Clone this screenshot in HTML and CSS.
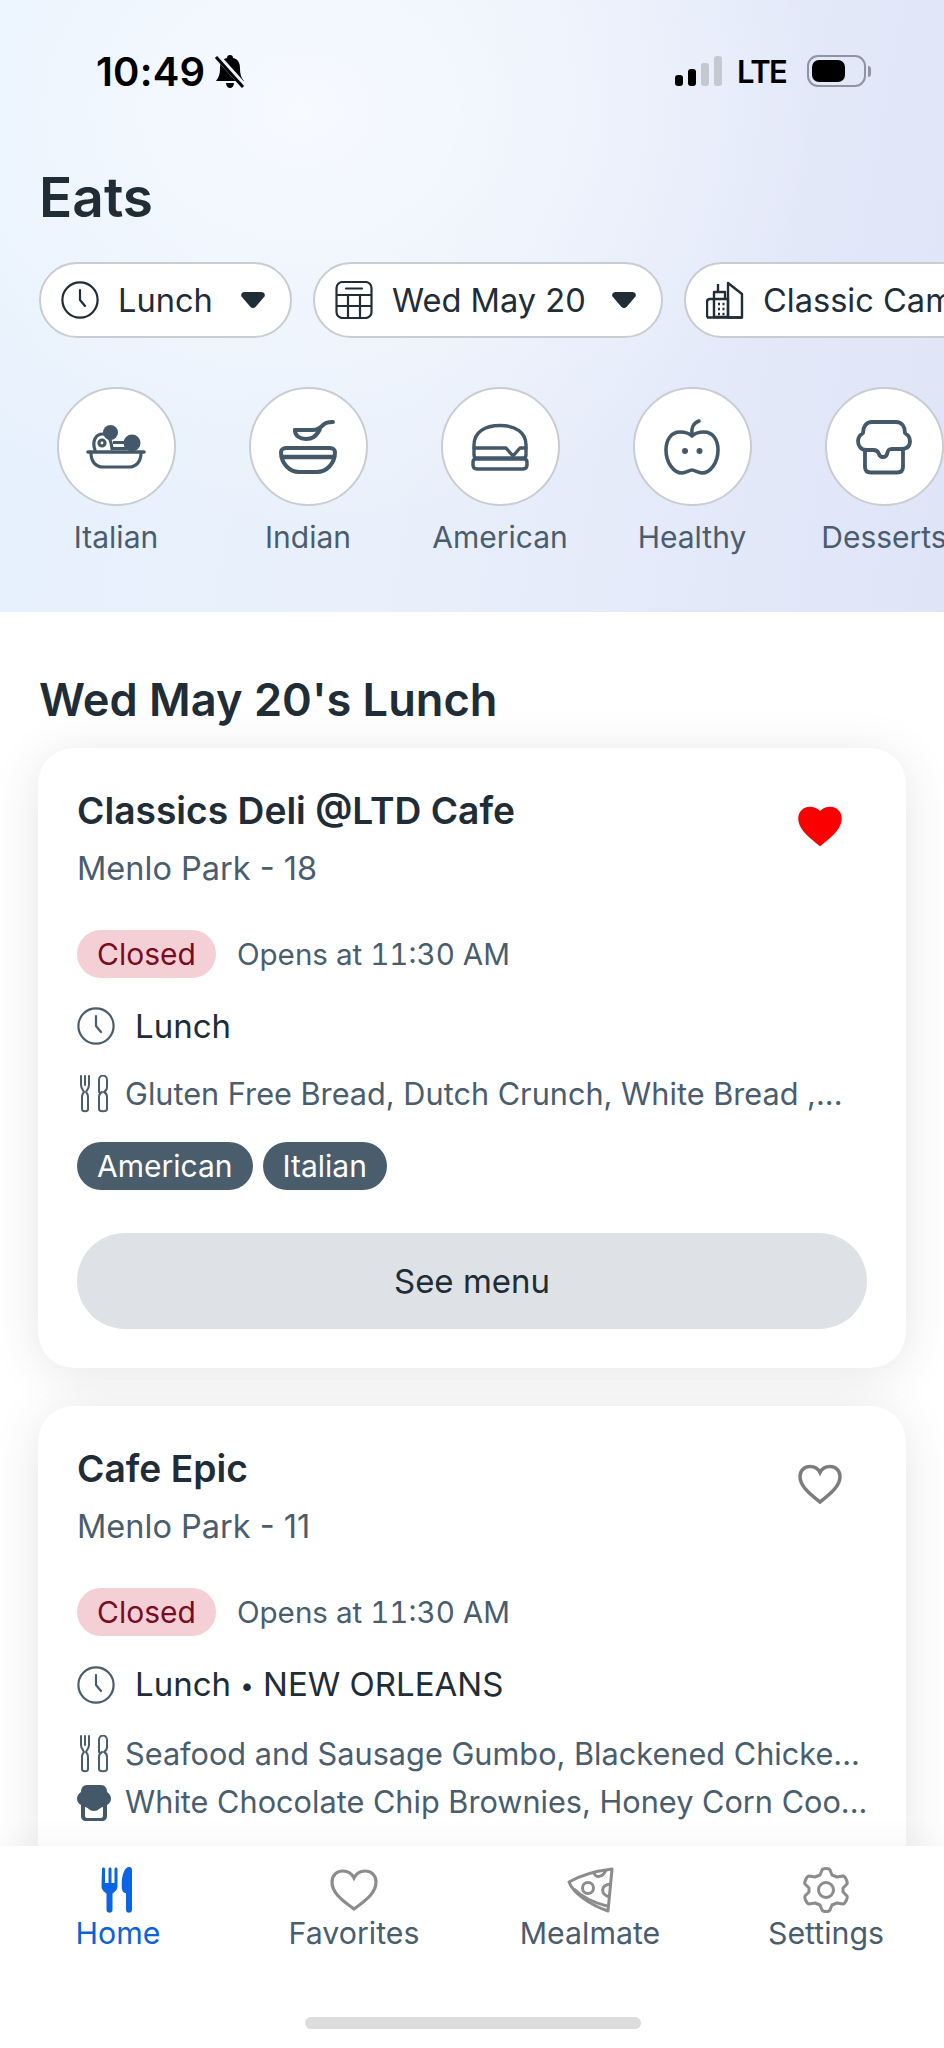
FILE: index.html
```html
<!DOCTYPE html>
<html lang="en">
<head>
  <meta charset="UTF-8">
  <title>Eats</title>
  <link rel="stylesheet" href="styles.css">
</head>
<body>

<svg class="sprite" xmlns="http://www.w3.org/2000/svg">
  <symbol id="i-clock" viewBox="0 0 38 38">
    <circle cx="19" cy="19" r="17.6" fill="none" stroke="currentColor" stroke-width="2.2"/>
    <path d="M19 9v10l5 6" fill="none" stroke="currentColor" stroke-width="2.2" stroke-linecap="round" stroke-linejoin="round"/>
  </symbol>
  <symbol id="i-fork" viewBox="-2 0 34 38">
    <g fill="none" stroke="currentColor" stroke-width="2" stroke-linecap="round" stroke-linejoin="round">
      <path d="M2 1v9c0 3 2 5 3 7c-2 2-2 3-2 5v12c0 3 6 3 6 0V22c0-2 0-3-2-5 1-2 3-4 3-7V1M6 1v9"/>
      <path d="M20 17V5c0-6 8-6 8 0v7c0 3-1 4-3 5 2 1 3 2 3 5v12c0 3-8 3-8 0V22c0-2 1-4 3-5"/>
    </g>
  </symbol>
  <symbol id="i-heart" viewBox="0 0 46 42">
    <path d="M23 39C10 29 3 22 3 13.500C3 7.500 7.500 3.500 13 3.500c4 0 8 2 10 6 2-4 6-6 10-6 5.500 0 10 4 10 10C43 22 36 29 23 39z"/>
  </symbol>
  <symbol id="i-caret" viewBox="0 0 24 16">
    <path d="M4 0h16c3 0 4.500 2 3.500 4.500L14.500 15c-1.300 1.300-3.700 1.300-5 0L.5 4.500C-.5 2 1 0 4 0z"/>
  </symbol>
</svg>

<div class="app">
  <div class="scroller">

    <header class="hero">
      <div class="status">
        <div class="status-left">
          <span class="time">10:49</span>
          <svg class="bell" viewBox="0 0 32 34">
            <path d="M16 1c2 0 3 1 3 3 5 1 7 5 7 10 0 6 1 9 4 13H2c3-4 4-7 4-13 0-5 2-9 7-10 0-2 1-3 3-3z" fill="#000"/>
            <path d="M12 29h8c0 3-2 5-4 5s-4-2-4-5z" fill="#000"/>
            <path d="M3 2l27 30" stroke="#eef3fd" stroke-width="6"/>
            <path d="M2 3l27 30" stroke="#000" stroke-width="3"/>
          </svg>
        </div>
        <div class="status-right">
          <div class="signal"><i class="b1"></i><i class="b2"></i><i class="b3"></i><i class="b4"></i></div>
          <span class="lte">LTE</span>
          <div class="battery"><div class="charge"></div></div>
          <div class="nub"></div>
        </div>
      </div>

      <h1>Eats</h1>

      <div class="chips">
        <div class="chip chip-meal">
          <svg class="chip-icon"><use href="#i-clock"/></svg>
          <span>Lunch</span>
          <svg class="caret"><use href="#i-caret"/></svg>
        </div>
        <div class="chip chip-date">
          <svg class="chip-icon" viewBox="0 0 38 38">
            <g fill="none" stroke="currentColor" stroke-width="2.200">
              <rect x="1.500" y="1" width="35" height="36" rx="6"/>
              <path d="M2 14h34M2 25h34M13 14v23M25 14v23"/>
              <path d="M11 7.500h16" stroke-linecap="round"/>
            </g>
          </svg>
          <span>Wed May 20</span>
          <svg class="caret"><use href="#i-caret"/></svg>
        </div>
        <div class="chip">
          <svg class="chip-icon" viewBox="0 0 38 38">
            <g fill="none" stroke="currentColor" stroke-width="2.400" stroke-linejoin="round">
              <path d="M1 36.500V21c0-2 1-3 3-3h4v-7h11v7"/>
              <path d="M12 11V3M22 36.500V14l0-12 14 11v23.500z"/>
              <path d="M1 36.500h35"/>
              <path d="M8 18h14v18H8z"/>
              <path d="M12 23h2M16.500 23h2M12 28h2M16.500 28h2M12 33h2M16.500 33h2"/>
            </g>
          </svg>
          <span>Classic Campus</span>
        </div>
      </div>

      <div class="cats">
        <div class="cat">
          <div class="cat-circle">
            <svg viewBox="0 0 60 60">
              <g fill="#43596a">
                <circle cx="24.500" cy="15.500" r="7.500"/>
                <circle cx="46" cy="26" r="8.500"/>
                <rect x="27" y="24" width="14" height="3"/>
                <rect x="27" y="30" width="14" height="3"/>
              </g>
              <g fill="none" stroke="#43596a" stroke-width="3.200" stroke-linecap="round">
                <path d="M9 33c-3-8 0-16 8-16 5 0 8 5 9 15"/>
                <circle cx="16" cy="26" r="3"/>
                <path d="M2 35h56" stroke-width="3.600"/>
                <path d="M5 36c0 9 5 14 12 14h26c7 0 12-5 12-14"/>
              </g>
            </svg>
          </div>
          <span>Italian</span>
        </div>
        <div class="cat">
          <div class="cat-circle">
            <svg viewBox="0 0 60 60">
              <g fill="none" stroke="#43596a" stroke-width="4" stroke-linecap="round" stroke-linejoin="round">
                <path d="M17 13h18c4 0 6-1 9-4 3-3 5-4 11-4"/>
                <path d="M17 13c0 6 5 9 11 9s10-2 14-10"/>
                <path d="M8 31h44c3 0 5 2 5 4 0 12-9 20-18 20H21C12 55 3 47 3 35c0-2 2-4 5-4z"/>
                <path d="M4 40h52" stroke-width="4.500"/>
              </g>
            </svg>
          </div>
          <span>Indian</span>
        </div>
        <div class="cat">
          <div class="cat-circle">
            <svg viewBox="0 0 60 60">
              <g fill="none" stroke="#43596a" stroke-width="3.400" stroke-linecap="round" stroke-linejoin="round">
                <path d="M4 28C4 15 15 8.500 30 8.500S56 15 56 28v10c0 2-1 3-3 3H7c-2 0-3-1-3-3z"/>
                <path d="M4 31h32l7 8 7-8h6"/>
                <path d="M6 42H54c2 0 3 1 3 3v3c0 3-2 4-4 4H7c-2 0-4-1-4-4v-3c0-2 1-3 3-3z"/>
              </g>
            </svg>
          </div>
          <span>American</span>
        </div>
        <div class="cat">
          <div class="cat-circle">
            <svg viewBox="0 0 60 60">
              <g fill="none" stroke="#43596a" stroke-width="3.600" stroke-linecap="round" stroke-linejoin="round">
                <path d="M30 19c3-3 7-4 12-4 9 0 14 8 14 18 0 13-8 23-16 23-4 0-7-3-10-3s-6 3-10 3C12 56 4 46 4 33c0-10 5-18 14-18 5 0 9 1 12 4z"/>
                <path d="M30 18c-1-6 1-12 7-14"/>
              </g>
              <circle cx="23" cy="34" r="3" fill="#43596a"/>
              <circle cx="37.500" cy="34" r="3" fill="#43596a"/>
            </svg>
          </div>
          <span>Healthy</span>
        </div>
        <div class="cat">
          <div class="cat-circle">
            <svg viewBox="0 0 60 60">
              <g fill="none" stroke="#43596a" stroke-width="3.800" stroke-linecap="round" stroke-linejoin="round">
                <path d="M13 33c-6 0-9-4-9-9 0-3 2-6 5-8 0-6 3-11 9-11h24c6 0 9 5 9 11 3 2 5 5 5 8 0 5-3 8-9 8H38c-4 0-4 2-5 5-1 4-7 4-8 0-1-3-3-4-6-4z"/>
                <path d="M11 33v17c0 4 2 5.500 6 5.500h26c4 0 6-1.500 6-5.500V32"/>
              </g>
            </svg>
          </div>
          <span>Desserts</span>
        </div>
      </div>
    </header>

    <main class="list">
      <h2>Wed May 20's Lunch</h2>

      <section class="card">
        <div class="card-head">
          <div>
            <h3>Classics Deli @LTD Cafe</h3>
            <p class="place">Menlo Park - 18</p>
          </div>
          <svg class="fav fav-on"><use href="#i-heart"/></svg>
        </div>
        <div class="hours">
          <span class="closed">Closed</span>
          <span class="opens">Opens at 11:30 AM</span>
        </div>
        <div class="meal">
          <svg class="meal-icon"><use href="#i-clock"/></svg>
          <span>Lunch</span>
        </div>
        <div class="food">
          <svg class="food-icon"><use href="#i-fork"/></svg>
          <span>Gluten Free Bread, Dutch Crunch, White Bread ,...</span>
        </div>
        <div class="tags">
          <span class="tag">American</span>
          <span class="tag">Italian</span>
        </div>
        <button class="menu-btn">See menu</button>
      </section>

      <section class="card card-cut">
        <div class="card-head">
          <div>
            <h3>Cafe Epic</h3>
            <p class="place">Menlo Park - 11</p>
          </div>
          <svg class="fav"><use href="#i-heart"/></svg>
        </div>
        <div class="hours">
          <span class="closed">Closed</span>
          <span class="opens">Opens at 11:30 AM</span>
        </div>
        <div class="meal">
          <svg class="meal-icon"><use href="#i-clock"/></svg>
          <span>Lunch <span class="dot">•</span> NEW ORLEANS</span>
        </div>
        <div class="food">
          <svg class="food-icon"><use href="#i-fork"/></svg>
          <span>Seafood and Sausage Gumbo, Blackened Chicke...</span>
        </div>
        <div class="food food-next">
          <svg class="food-icon" viewBox="0 0 34 38">
            <path d="M10 2h14c4 0 6 3 6 7 3 2 4 4 4 7s-2 5-4 6v11c0 3-2 5-5 5H9c-3 0-5-2-5-5V22c-2-1-4-3-4-6s1-5 4-7c0-4 2-7 6-7z" fill="#43596a"/>
            <path d="M8 24c3 0 4 4 9 4s6-4 9-4v9c0 1-1 2-2 2H10c-1 0-2-1-2-2z" fill="#fff"/>
          </svg>
          <span>White Chocolate Chip Brownies, Honey Corn Coo...</span>
        </div>
      </section>
    </main>
  </div>

  <nav class="tabs">
    <div class="tab tab-on">
      <svg viewBox="0 0 60 46">
        <path d="M14 2c0-2 3-2 3 0v14h3.500V2c0-2 3-2 3 0v14h3V2c0-2 3-2 3 0v17c0 4-3 6-5 7.500V43c0 3.500-6 3.500-6 0V26.500c-2-1.500-5-3.500-5-7.500z" fill="#0b63e5"/>
        <path d="M44 3c0-2-1-3-3-3-4 0-7.300 7-7.300 18 0 6 1.300 8 4.300 8V43c0 3.500 6 3.500 6 0z" fill="#0b63e5"/>
      </svg>
      <span>Home</span>
    </div>
    <div class="tab">
      <svg viewBox="0 0 60 46">
        <path d="M30 42C16 32 8 25 8 15 8 8 13 4 19 4c5 0 9 3 11 7 2-4 6-7 11-7 6 0 11 4 11 11 0 10-8 17-22 27z" fill="none" stroke="#8c8c8c" stroke-width="3.200"/>
      </svg>
      <span>Favorites</span>
    </div>
    <div class="tab">
      <svg viewBox="0 0 60 46">
        <g fill="none" stroke="#8c8c8c" stroke-width="3" stroke-linejoin="round">
          <path d="M52 2L48 44C30 38 13 26 9 15 21 8 36 4 52 2z"/>
          <path d="M14 22C22 30 35 36 47 39"/>
          <path d="M34 6c1 5 9 5 12-3"/>
          <circle cx="28" cy="21" r="5.500"/>
          <path d="M51 17c-11 1-11 11-1 13"/>
        </g>
      </svg>
      <span>Mealmate</span>
    </div>
    <div class="tab">
      <svg viewBox="0 0 60 46">
        <g fill="none" stroke="#8c8c8c" stroke-width="3" stroke-linejoin="round">
          <path d="M26 3c1-2 7-2 8 0l2 5 5 2 6-1c2 0 5 6 4 8l-4 4v4l4 4c1 2-2 8-4 8l-6-1-5 2-2 5c-1 2-7 2-8 0l-2-5-5-2-6 1c-2 0-5-6-4-8l4-4v-4l-4-4c-1-2 2-8 4-8l6 1 5-2z"/>
          <circle cx="30" cy="23" r="7.500"/>
        </g>
      </svg>
      <span>Settings</span>
    </div>
  </nav>

  <div class="home-area"><div class="home-bar"></div></div>
</div>

</body>
</html>
```

FILE: styles.css
```css
:root {
  --ink: #212d36;
  --slate: #4a5d6d;
  --line: #c9ccd1;
}
* {
  box-sizing: border-box;
  margin: 0;
  padding: 0;
}
body {
  font-family: Inter, sans-serif;
  background: #fff;
  color: var(--ink);
}
.sprite {
  display: none;
}
.app {
  width: 944px;
  height: 2048px;
  display: flex;
  flex-direction: column;
  overflow: hidden;
}
.scroller {
  flex: 1;
  min-height: 0;
  overflow: hidden;
}

/* header */
.hero {
  height: 612px;
  padding: 54px 0 0 39px;
  overflow: hidden;
  background:
    radial-gradient(ellipse 520px 420px at 300px 110px, rgba(248, 251, 255, .9), rgba(248, 251, 255, 0)),
    linear-gradient(100deg, #e6f1fd 0%, #e9f0fb 45%, #dfe4f7 100%);
}
.status {
  display: flex;
  justify-content: space-between;
  height: 34px;
  padding: 0 73px 0 57px;
}
.status-left,
.status-right {
  display: flex;
  align-items: center;
}
.time {
  font-size: 40px;
  font-weight: 600;
  color: #000;
  letter-spacing: .2px;
}
.bell {
  width: 32px;
  height: 34px;
  margin-left: 9px;
}
.signal {
  display: flex;
  align-items: flex-end;
  gap: 5px;
  height: 30px;
}
.signal i {
  width: 8px;
  border-radius: 3px;
  background: #000;
}
.signal .b1 { height: 11px; }
.signal .b2 { height: 17px; }
.signal .b3 { height: 23px; background: #c4c8d0; }
.signal .b4 { height: 30px; background: #c4c8d0; }
.lte {
  font-size: 31px;
  font-weight: 600;
  letter-spacing: -1.5px;
  color: #000;
  margin-left: 15px;
  width: 70px;
}
.battery {
  width: 59px;
  height: 32px;
  border: 2px solid #8f93a2;
  border-radius: 11px;
  padding: 3px;
}
.charge {
  width: 33px;
  height: 22px;
  background: #000;
  border-radius: 7px;
}
.nub {
  width: 3px;
  height: 11px;
  margin-left: 2px;
  background: #8f93a2;
  border-radius: 0 3px 3px 0;
}
h1 {
  font-size: 55px;
  font-weight: 600;
  line-height: 64px;
  margin-top: 77px;
}

/* filter pills */
.chips {
  display: flex;
  gap: 21px;
  margin-top: 33px;
}
.chip {
  flex: 0 0 auto;
  display: flex;
  align-items: center;
  height: 76px;
  padding: 0 22px 0 20px;
  background: #fff;
  border: 2px solid var(--line);
  border-radius: 38px;
  font-size: 32.6px;
}
.chip-meal {
  width: 253px;
}
.chip-date {
  width: 350px;
}
.chip-icon {
  flex: none;
  width: 38px;
  height: 38px;
  margin-right: 19px;
}
.caret {
  width: 24px;
  height: 16px;
  margin-left: auto;
  margin-right: 3px;
  fill: var(--ink);
}

/* cuisine shortcuts */
.cats {
  display: flex;
  margin: 49px 0 0 -19px;
}
.cat {
  flex: 0 0 192px;
  display: flex;
  flex-direction: column;
  align-items: center;
}
.cat-circle {
  width: 119px;
  height: 119px;
  display: flex;
  align-items: center;
  justify-content: center;
  background: #fff;
  border: 2px solid var(--line);
  border-radius: 50%;
}
.cat-circle svg {
  width: 60px;
  height: 60px;
}
.cat span {
  margin-top: 10px;
  font-size: 30px;
  line-height: 42px;
  color: var(--slate);
  white-space: nowrap;
}

/* restaurant cards */
.list {
  padding: 0 38px;
}
h2 {
  font-size: 45.2px;
  font-weight: 600;
  line-height: 56px;
  margin: 60px 0 0 1px;
}
.card {
  margin-top: 20px;
  padding: 39px;
  background: #fff;
  border-radius: 36px;
  box-shadow: 0 6px 50px rgba(0, 0, 0, .1);
}
.card + .card {
  margin-top: 38px;
}
.card-cut {
  padding-bottom: 120px;
}
.card-head {
  display: flex;
  justify-content: space-between;
}
h3 {
  font-size: 37.2px;
  font-weight: 600;
  line-height: 48px;
}
.place {
  margin-top: 13px;
  font-size: 32.5px;
  line-height: 42px;
  color: var(--slate);
}
.fav {
  width: 46px;
  height: 42px;
  margin: 18px 24px 0 0;
  fill: none;
  stroke: #7d7d7d;
  stroke-width: 3.5;
}
.fav-on {
  fill: #fb0000;
  stroke: #fb0000;
}
.hours {
  display: flex;
  align-items: center;
  margin-top: 40px;
  font-size: 30px;
  color: var(--slate);
}
.closed {
  height: 48px;
  line-height: 48px;
  padding: 0 20px;
  margin-right: 21px;
  border-radius: 24px;
  background: #f4d0d6;
  color: #7a0c1e;
}
.opens {
  font-size: 29.6px;
  font-variant-numeric: tabular-nums;
}
.meal {
  display: flex;
  align-items: center;
  margin-top: 27px;
  font-size: 33px;
  line-height: 42px;
}
.meal-icon {
  width: 38px;
  height: 38px;
  margin-right: 20px;
  color: var(--slate);
}
.dot {
  font-size: 24px;
  vertical-align: 2px;
}
.food {
  display: flex;
  align-items: center;
  margin-top: 26px;
  font-size: 30.7px;
  line-height: 42px;
  color: var(--slate);
  white-space: nowrap;
}
.food-next {
  margin-top: 6px;
}
.food-icon {
  flex: none;
  width: 34px;
  height: 38px;
  margin-right: 14px;
  color: var(--slate);
}
.tags {
  display: flex;
  gap: 10px;
  margin-top: 27px;
}
.tag {
  height: 48px;
  line-height: 48px;
  padding: 0 20px;
  border-radius: 24px;
  background: var(--slate);
  color: #fff;
  font-size: 30px;
}
.menu-btn {
  display: block;
  width: 100%;
  height: 96px;
  margin-top: 43px;
  border: none;
  border-radius: 48px;
  background: #dee2e6;
  color: var(--ink);
  font: 400 33px Inter, sans-serif;
}

/* bottom bar */
.tabs {
  flex: none;
  display: grid;
  grid-template-columns: repeat(4, 1fr);
  padding-top: 21px;
  background: #fff;
  position: relative;
  box-shadow: 0 -10px 24px rgba(0, 0, 0, .03);
}
.tab {
  display: flex;
  flex-direction: column;
  align-items: center;
  font-size: 30.3px;
  line-height: 36px;
  color: var(--slate);
}
.tab svg {
  width: 60px;
  height: 46px;
  margin-bottom: 2px;
}
.tab-on {
  color: #0b63d8;
}
.home-area {
  flex: none;
  height: 97px;
  padding-top: 66px;
  background: #fff;
  position: relative;
}
.home-bar {
  width: 336px;
  height: 12px;
  margin-left: 305px;
  border-radius: 6px;
  background: #dcdcdc;
}
```
